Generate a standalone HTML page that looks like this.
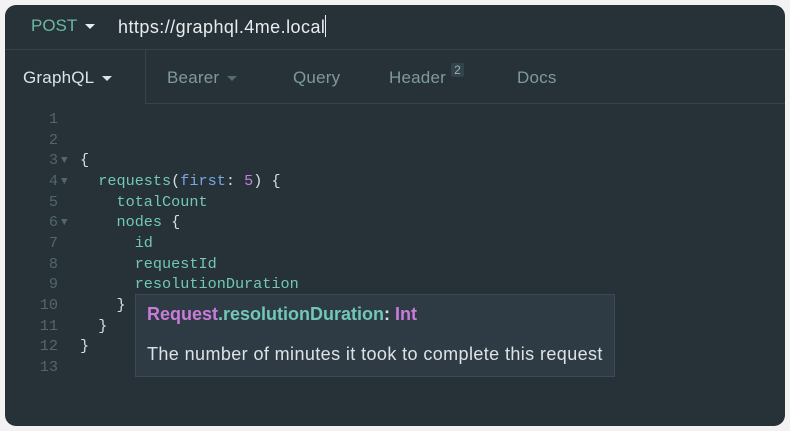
<!DOCTYPE html>
<html><head><style>
body{margin:0;width:790px;height:431px;background:#f2f2f2;overflow:hidden;font-family:"Liberation Sans",sans-serif}
.win{position:absolute;left:5px;top:5px;width:780px;height:421px;background:#263238;border-radius:11px;overflow:hidden}
.top{position:absolute;left:0;top:0;width:780px;height:44px;border-bottom:1px solid #34444d}
.post{position:absolute;left:26px;top:11px;font-size:17px;color:#6cb7a3}
.caret{display:inline-block;width:0;height:0;border-left:5px solid transparent;border-right:5px solid transparent;border-top:5px solid currentColor;vertical-align:middle;margin-left:8px}
.url{position:absolute;left:113px;top:10px;font-size:18px;letter-spacing:0.45px;color:#e8ecee}
.url span{display:inline-block;width:1px;height:22px;background:#e8ecee;vertical-align:-4px}
.tabs{position:absolute;left:0;top:45px;width:780px;height:53px;border-bottom:1px solid #34444d}
.gq{position:absolute;left:0;top:45px;width:140px;height:54px;background:#263238;border-right:1px solid #34444d}
.t{position:absolute;top:63px;font-size:17px;color:#7f9a9a;letter-spacing:0.2px}
.badge{position:absolute;top:-5px;right:-18px;font-size:12px;background:#33434a;color:#9aafaf;padding:0 3px;border-radius:2px}
.code{position:absolute;left:0;top:104px;font-family:"Liberation Mono",monospace;font-size:15.2px;line-height:20.67px}
.ln{position:absolute;left:0;width:53px;text-align:right;color:#52666b}
.fold{position:absolute;left:56px;top:0;color:#52666b;font-size:11px}
.c{position:absolute;left:75px;white-space:pre;color:#d6dee0}
.f{color:#72c7b6}.a{color:#79a6e0}.n{color:#c77dd8}
.tip{position:absolute;left:130px;top:289px;width:478px;height:81px;background:#2f3b44;border:1px solid #3b4a53;font-size:18px}
</style></head><body>
<div class="win">
<div class="top"></div>
<div class="post">POST<span class="caret" style="color:#e8ecee"></span></div>
<div class="url">https://graphql.4me.local<span></span></div>
<div class="tabs"></div>
<div class="gq"></div>
<div class="t" style="left:18px;color:#dce3e5">GraphQL<span class="caret"></span></div>
<div class="t" style="left:162px">Bearer<span class="caret" style="color:#556a6c"></span></div>
<div class="t" style="left:288px">Query</div>
<div class="t" style="left:384px">Header<span class="badge">2</span></div>
<div class="t" style="left:512px">Docs</div>
<div class="code">
<div class="ln" style="top:0">1</div>
<div class="ln" style="top:20.67px">2</div>
<div class="ln" style="top:41.3px">3</div><div class="fold" style="top:42.3px">▼</div><div class="c" style="top:41.3px">{</div>
<div class="ln" style="top:62px">4</div><div class="fold" style="top:63px">▼</div><div class="c" style="top:62px">  <span class="f">requests</span>(<span class="a">first</span>: <span class="n">5</span>) {</div>
<div class="ln" style="top:82.7px">5</div><div class="c" style="top:82.7px">    <span class="f">totalCount</span></div>
<div class="ln" style="top:103.3px">6</div><div class="fold" style="top:104.3px">▼</div><div class="c" style="top:103.3px">    <span class="f">nodes</span> {</div>
<div class="ln" style="top:124px">7</div><div class="c" style="top:124px">      <span class="f">id</span></div>
<div class="ln" style="top:144.7px">8</div><div class="c" style="top:144.7px">      <span class="f">requestId</span></div>
<div class="ln" style="top:165.3px">9</div><div class="c" style="top:165.3px">      <span class="f">resolutionDuration</span></div>
<div class="ln" style="top:186px">10</div><div class="c" style="top:186px">    }</div>
<div class="ln" style="top:206.7px">11</div><div class="c" style="top:206.7px">  }</div>
<div class="ln" style="top:227.3px">12</div><div class="c" style="top:227.3px">}</div>
<div class="ln" style="top:248px">13</div>
</div>
<div class="tip">
<div style="position:absolute;left:11px;top:9px;font-weight:bold"><span style="color:#c77dd8">Request</span><span style="color:#72c7b6">.resolutionDuration</span><span style="color:#d6dee0">: </span><span style="color:#c77dd8">Int</span></div>
<div style="position:absolute;left:11px;top:49px;color:#dce3e5;letter-spacing:0.4px;white-space:nowrap">The number of minutes it took to complete this request</div>
</div>
</div>
</body></html>
